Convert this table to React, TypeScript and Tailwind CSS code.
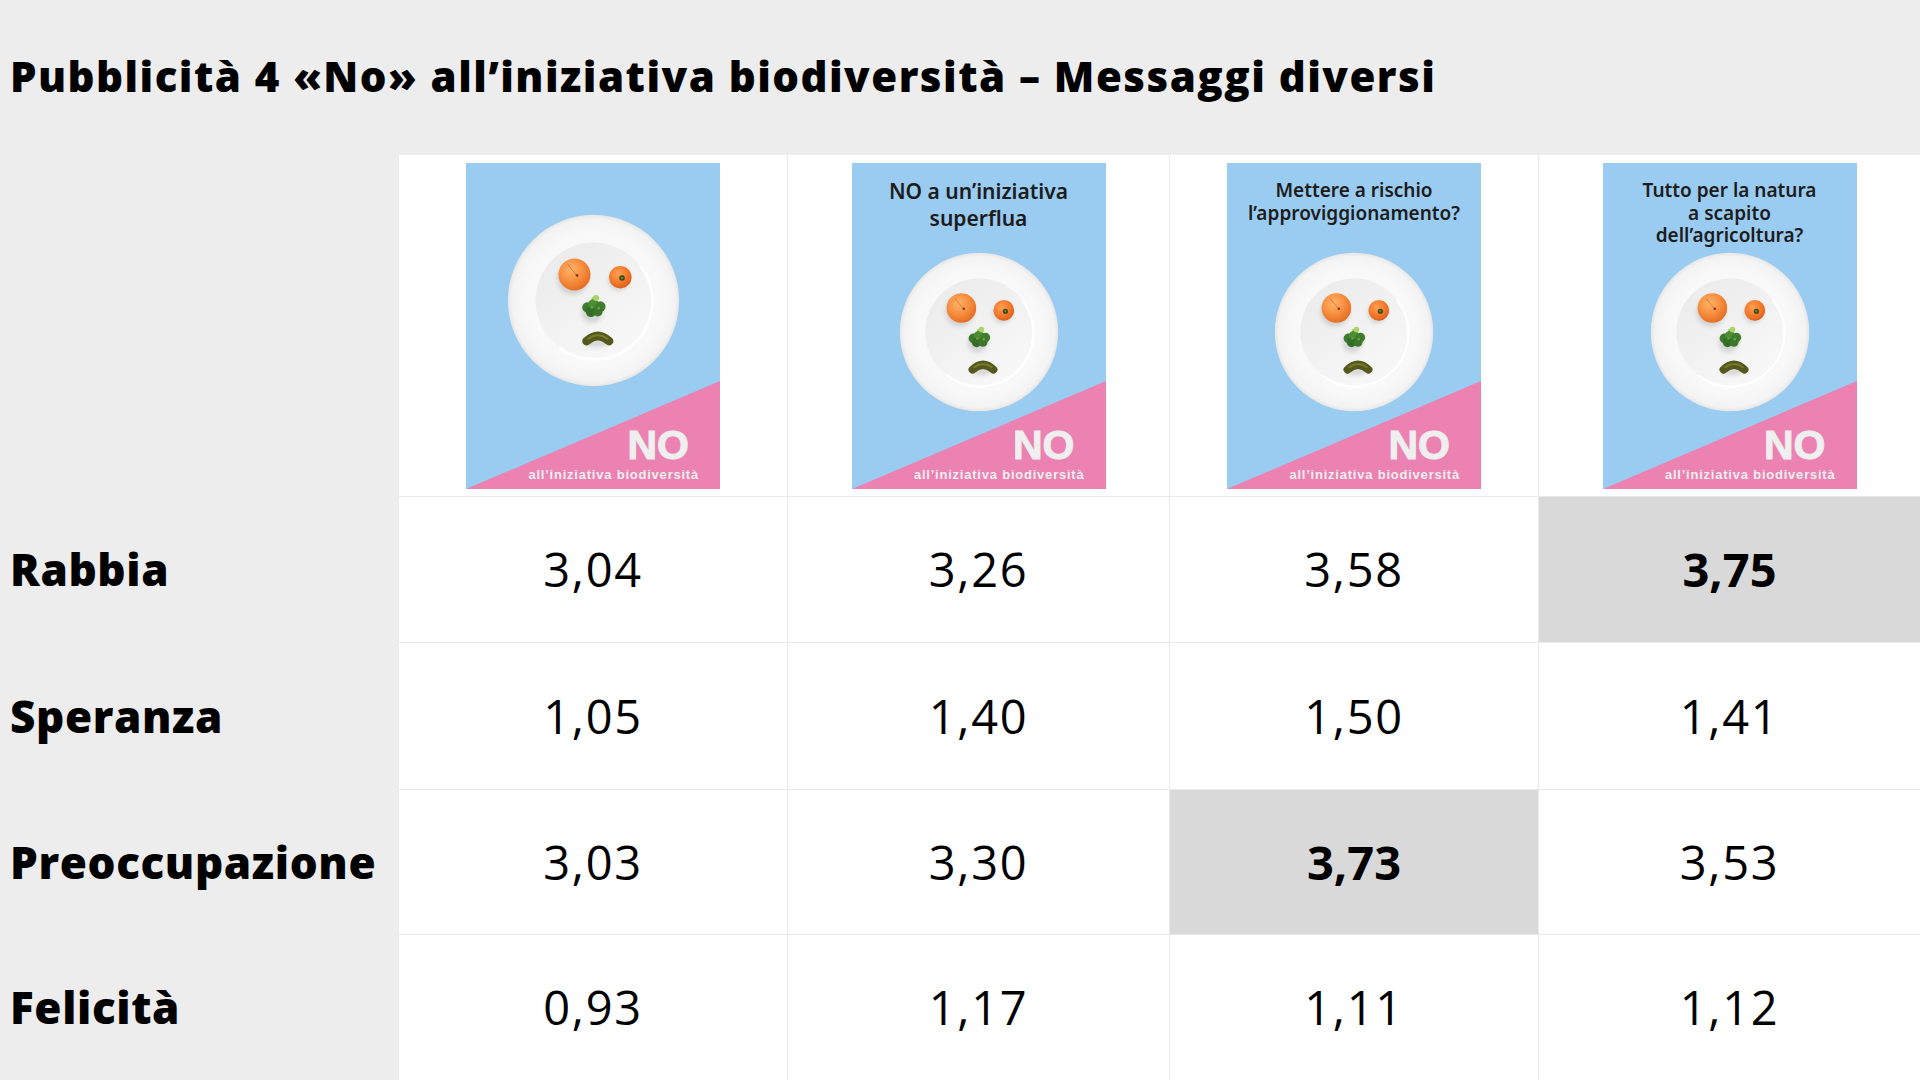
import React from "react";

function Plate({ size }: { size: number }) {
  return (
    <svg width={size} height={size} viewBox="-100 -100 200 200">
      <defs>
        <radialGradient id="rimG" cx="0.5" cy="0.5" r="0.5">
          <stop offset="0" stopColor="#ffffff" />
          <stop offset="0.8" stopColor="#f8f8f8" />
          <stop offset="0.95" stopColor="#f3f3f3" />
          <stop offset="1" stopColor="#e6e6e6" />
        </radialGradient>
        <linearGradient id="wellG" x1="0.2" y1="0.1" x2="0.8" y2="0.9">
          <stop offset="0" stopColor="#ececec" />
          <stop offset="0.6" stopColor="#f3f3f3" />
          <stop offset="1" stopColor="#f8f8f8" />
        </linearGradient>
        <radialGradient id="apricotG" cx="0.4" cy="0.35" r="0.65">
          <stop offset="0" stopColor="#ffb46a" />
          <stop offset="0.6" stopColor="#f68c3c" />
          <stop offset="1" stopColor="#e46f27" />
        </radialGradient>
        <radialGradient id="tomatoG" cx="0.4" cy="0.35" r="0.65">
          <stop offset="0" stopColor="#ffa055" />
          <stop offset="0.6" stopColor="#f47a2c" />
          <stop offset="1" stopColor="#dd6220" />
        </radialGradient>
        <filter id="softB" x="-50%" y="-50%" width="200%" height="200%">
          <feGaussianBlur stdDeviation="2.5" />
        </filter>
      </defs>
      <circle cx="0" cy="0" r="99" fill="url(#rimG)" />
      <circle cx="0" cy="0" r="67" fill="url(#wellG)" />
      <path d="M 54 -40 A 67 67 0 0 1 -40 54" fill="none" stroke="#ffffff" strokeWidth="3" opacity="0.9" />
      {/* shadows */}
      <g filter="url(#softB)" opacity="0.22" fill="#6b6b6b">
        <circle cx="-24" cy="-25" r="18" />
        <circle cx="29" cy="-23" r="12" />
        <circle cx="-2" cy="14" r="12" />
        <ellipse cx="3" cy="49" rx="14" ry="5" />
      </g>
      {/* apricot */}
      <circle cx="-22" cy="-30" r="18.5" fill="url(#apricotG)" />
      <path d="M -30 -42 Q -24 -34 -19 -29" stroke="#c85a1c" strokeWidth="0.8" fill="none" />
      <circle cx="-19" cy="-29" r="1.6" fill="#7a3a12" />
      {/* tomato */}
      <circle cx="31" cy="-27" r="13" fill="url(#tomatoG)" />
      <circle cx="33" cy="-26" r="3.2" fill="#2f4a1a" />
      <circle cx="33" cy="-26" r="1.4" fill="#6f8c2a" />
      {/* broccoli */}
      <g>
        <path d="M -3 6 L -2 -4 L 4 -2 L 3 6 Z" fill="#9ccc5a" />
        <circle cx="-7" cy="8" r="6" fill="#3e7a2c" />
        <circle cx="0" cy="5" r="6.5" fill="#4d8c35" />
        <circle cx="8" cy="7" r="6" fill="#3f7d2d" />
        <circle cx="-3" cy="13" r="6" fill="#356e27" />
        <circle cx="5" cy="13" r="5.5" fill="#3b762b" />
        <circle cx="3" cy="-3" r="3.5" fill="#a8d466" />
        <circle cx="-2" cy="8" r="1.5" fill="#6aa84a" />
        <circle cx="6" cy="9" r="1.5" fill="#6aa84a" />
      </g>
      {/* pickle */}
      <path d="M -8 47 Q 5 35 18 47" stroke="#55581c" strokeWidth="10" strokeLinecap="round" fill="none" />
      <path d="M -6 44 Q 5 36 16 44" stroke="#7f8230" strokeWidth="2.5" strokeLinecap="round" fill="none" opacity="0.8" />
    </svg>
  );
}

type PosterProps = { lines?: string[]; variant: "plain" | "two" | "three" | "two-sm" };

function Poster({ lines, variant }: PosterProps) {
  const plain = variant === "plain";
  return (
    <div className="relative w-[254px] h-[326px] bg-[#9acbf0] overflow-hidden">
      <svg className="absolute inset-0" width="254" height="326">
        <polygon points="0,326 254,218 254,326" fill="#ec82b2" />
      </svg>
      {lines && (
        <div
          className={
            variant === "two"
              ? "absolute top-[15px] inset-x-0 text-center text-[21px] leading-[27px] font-semibold text-[#1c1c1c] font-['Noto_Sans',sans-serif]"
              : "absolute top-[16px] inset-x-0 text-center text-[19px] leading-[22.5px] font-semibold text-[#1c1c1c] font-['Noto_Sans',sans-serif]"
          }
        >
          {lines.map((l, i) => (
            <div key={i}>{l}</div>
          ))}
        </div>
      )}
      <div className={plain ? "absolute top-[51px] left-[41px]" : "absolute top-[89px] left-[47px]"}>
        <Plate size={plain ? 173 : 160} />
      </div>
      <div className="absolute top-[262px] right-[31px] text-[41px] leading-none font-black text-[#efefef] font-['Liberation_Sans',sans-serif] [-webkit-text-stroke:1px_#efefef]">
        NO
      </div>
      <div className="absolute top-[305px] right-[21px] text-[13px] leading-none font-bold tracking-[0.06em] text-[#efefef] font-['Liberation_Sans',sans-serif]">
        all’iniziativa biodiversità
      </div>
    </div>
  );
}

const posters: PosterProps[] = [
  { variant: "plain" },
  { variant: "two", lines: ["NO a un’iniziativa", "superflua"] },
  { variant: "two-sm", lines: ["Mettere a rischio", "l’approviggionamento?"] },
  { variant: "three", lines: ["Tutto per la natura", "a scapito", "dell’agricoltura?"] },
];

const rows: { label: string; values: string[]; hl: number }[] = [
  { label: "Rabbia", values: ["3,04", "3,26", "3,58", "3,75"], hl: 3 },
  { label: "Speranza", values: ["1,05", "1,40", "1,50", "1,41"], hl: -1 },
  { label: "Preoccupazione", values: ["3,03", "3,30", "3,73", "3,53"], hl: 2 },
  { label: "Felicità", values: ["0,93", "1,17", "1,11", "1,12"], hl: -1 },
];

export default function App() {
  return (
    <div className="w-[1920px] h-[1080px] bg-[#ededed] flex flex-col overflow-hidden text-black font-['Open_Sans',sans-serif]">
      <h1 className="h-[155px] shrink-0 pl-[10px] pt-[55px] text-[42px] leading-[42px] font-extrabold tracking-[0.035em] whitespace-nowrap">
        Pubblicità 4 «No» all’iniziativa biodiversità – Messaggi diversi
      </h1>
      <div className="grid grid-cols-[399px_388px_382px_369px_382px] grid-rows-[341px_146px_147px_145px_146px]">
        <div />
        {posters.map((p, i) => (
          <div
            key={i}
            className={
              i > 0
                ? "bg-white flex justify-center pt-[8px] border-l border-[#e9e9e9]"
                : "bg-white flex justify-center pt-[8px]"
            }
          >
            <Poster {...p} />
          </div>
        ))}
        {rows.map((r) => (
          <React.Fragment key={r.label}>
            <div className="flex items-center pl-[10px] text-[44px] font-extrabold tracking-[0.014em] whitespace-nowrap">{r.label}</div>
            {r.values.map((v, j) => (
              <div
                key={j}
                className={[
                  "flex items-center justify-center border-t border-[#e9e9e9] text-[47px]",
                  j > 0 ? "border-l" : "",
                  j === r.hl ? "bg-[#d9d9d9] font-bold" : "bg-white font-normal tracking-[0.035em]",
                ].join(" ")}
              >
                {v}
              </div>
            ))}
          </React.Fragment>
        ))}
      </div>
    </div>
  );
}
